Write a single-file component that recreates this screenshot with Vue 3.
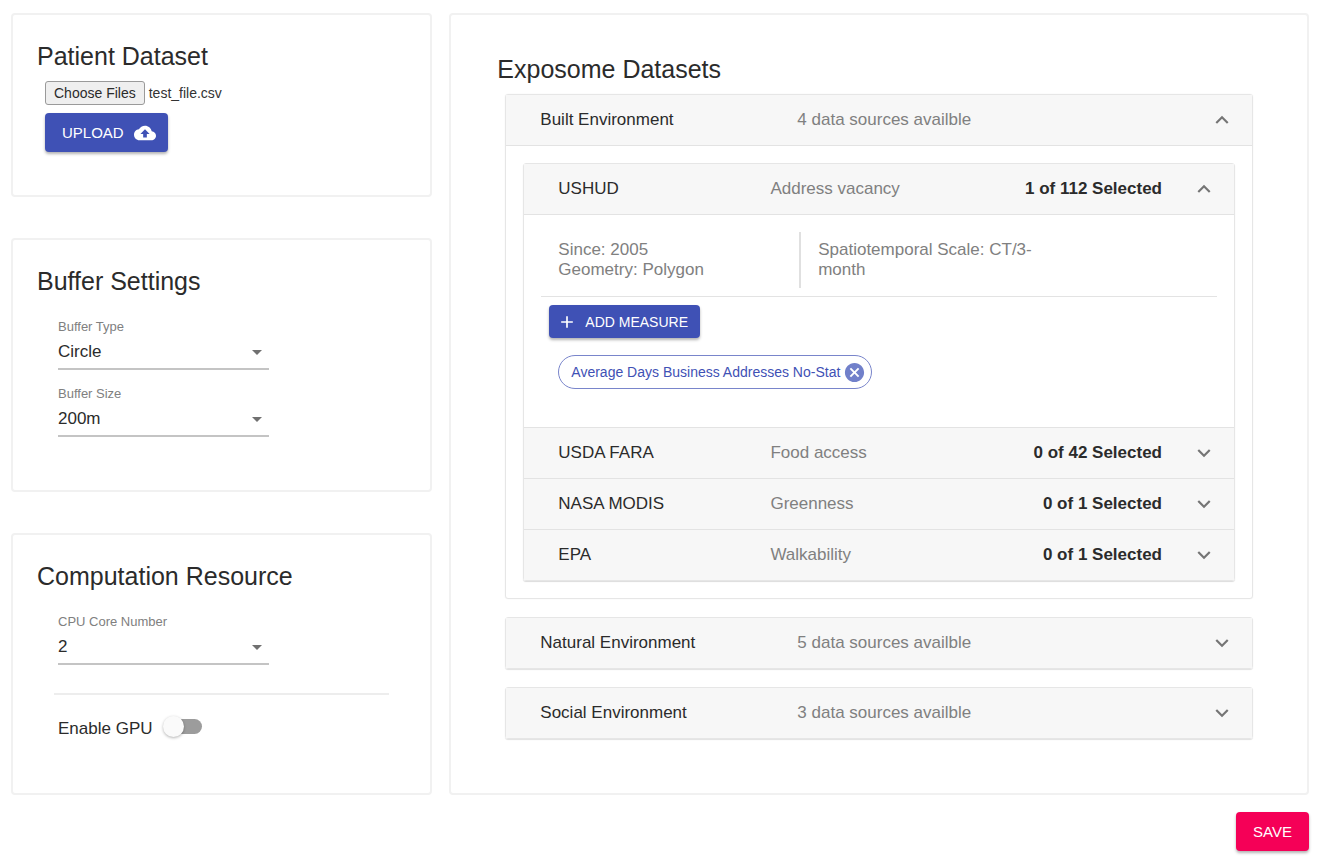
<script setup>
import { onMounted, ref } from 'vue';

const fileInput = ref(null);
const bufferType = ref('Circle');
const bufferSize = ref('200m');
const cpuCores = ref('2');
const enableGpu = ref(false);

const categories = ref([
  {
    name: 'Built Environment',
    open: true,
    count: 4,
    sources: [
      {
        name: 'USHUD',
        topic: 'Address vacancy',
        total: 112,
        open: true,
        since: 2005,
        geometry: 'Polygon',
        scale: 'CT/3-month',
        measures: ['Average Days Business Addresses No-Stat'],
      },
      { name: 'USDA FARA', topic: 'Food access', total: 42, open: false, measures: [] },
      { name: 'NASA MODIS', topic: 'Greenness', total: 1, open: false, measures: [] },
      { name: 'EPA', topic: 'Walkability', total: 1, open: false, measures: [] },
    ],
  },
  { name: 'Natural Environment', open: false, count: 5, sources: [] },
  { name: 'Social Environment', open: false, count: 3, sources: [] },
]);

function removeMeasure(source, index) {
  source.measures.splice(index, 1);
}

onMounted(() => {
  const transfer = new DataTransfer();
  transfer.items.add(new File([''], 'test_file.csv', { type: 'text/csv' }));
  fileInput.value.files = transfer.files;
});
</script>

<template>
  <main class="page">
    <div class="columns">
      <div class="side">
        <section class="card">
          <h2 class="title">Patient Dataset</h2>
          <div class="upload">
            <input ref="fileInput" class="file" type="file" multiple aria-label="Patient dataset files" />
            <button class="btn primary" type="button">
              Upload
              <svg class="cloud" viewBox="0 0 24 24" aria-hidden="true">
                <path
                  d="M19.35 10.04C18.67 6.59 15.64 4 12 4 9.11 4 6.6 5.64 5.35 8.04 2.34 8.36 0 10.91 0 14c0 3.31 2.69 6 6 6h13c2.76 0 5-2.24 5-5 0-2.64-2.05-4.78-4.65-4.96zM14 13v4h-4v-4H7l5-5 5 5h-3z"
                />
              </svg>
            </button>
          </div>
        </section>

        <section class="card">
          <h2 class="title">Buffer Settings</h2>
          <div class="fields">
            <div class="field">
              <label for="buffer-type">Buffer Type</label>
              <div class="select">
                <select id="buffer-type" v-model="bufferType">
                  <option>Circle</option>
                  <option>Square</option>
                </select>
                <svg viewBox="0 0 24 24" aria-hidden="true"><path d="M7 10l5 5 5-5z" /></svg>
              </div>
            </div>
            <div class="field">
              <label for="buffer-size">Buffer Size</label>
              <div class="select">
                <select id="buffer-size" v-model="bufferSize">
                  <option>100m</option>
                  <option>200m</option>
                  <option>500m</option>
                </select>
                <svg viewBox="0 0 24 24" aria-hidden="true"><path d="M7 10l5 5 5-5z" /></svg>
              </div>
            </div>
          </div>
        </section>

        <section class="card">
          <h2 class="title">Computation Resource</h2>
          <div class="fields">
            <div class="field">
              <label for="cpu-cores">CPU Core Number</label>
              <div class="select">
                <select id="cpu-cores" v-model="cpuCores">
                  <option>1</option>
                  <option>2</option>
                  <option>4</option>
                </select>
                <svg viewBox="0 0 24 24" aria-hidden="true"><path d="M7 10l5 5 5-5z" /></svg>
              </div>
            </div>
          </div>
          <hr class="divider" />
          <div class="gpu">
            <label for="gpu">Enable GPU</label>
            <input id="gpu" v-model="enableGpu" class="switch" type="checkbox" />
          </div>
        </section>
      </div>

      <section class="card datasets">
        <h2 class="title">Exposome Datasets</h2>
        <div class="categories">
          <div v-for="category in categories" :key="category.name" class="panel" :class="{ expanded: category.open }">
            <button
              class="summary"
              :class="{ open: category.open }"
              type="button"
              :aria-expanded="category.open"
              @click="category.open = !category.open"
            >
              <span class="name">{{ category.name }}</span>
              <span class="note">{{ category.count }} data sources availble</span>
              <svg class="chevron" viewBox="0 0 24 24" aria-hidden="true">
                <path d="M16.59 8.59L12 13.17 7.41 8.59 6 10l6 6 6-6z" />
              </svg>
            </button>

            <div v-if="category.open" class="category-body">
              <div class="sources">
                <div v-for="source in category.sources" :key="source.name" class="source">
                  <button
                    class="summary"
                    :class="{ open: source.open }"
                    type="button"
                    :aria-expanded="source.open"
                    @click="source.open = !source.open"
                  >
                    <span class="name">{{ source.name }}</span>
                    <span class="note">{{ source.topic }}</span>
                    <span class="selected">{{ source.measures.length }} of {{ source.total }} Selected</span>
                    <svg class="chevron" viewBox="0 0 24 24" aria-hidden="true">
                      <path d="M16.59 8.59L12 13.17 7.41 8.59 6 10l6 6 6-6z" />
                    </svg>
                  </button>

                  <div v-if="source.open" class="details">
                    <div class="info">
                      <p class="about">Since: {{ source.since }}<br />Geometry: {{ source.geometry }}</p>
                      <p class="scale">Spatiotemporal Scale: {{ source.scale }}</p>
                    </div>
                    <button class="btn primary small" type="button">
                      <svg class="plus" viewBox="0 0 24 24" aria-hidden="true">
                        <path d="M19 13h-6v6h-2v-6H5v-2h6V5h2v6h6v2z" />
                      </svg>
                      Add Measure
                    </button>
                    <div class="chips">
                      <span v-for="(measure, i) in source.measures" :key="measure" class="chip">
                        {{ measure }}
                        <button type="button" :aria-label="'Remove ' + measure" @click="removeMeasure(source, i)">
                          <svg viewBox="0 0 24 24" aria-hidden="true">
                            <path
                              d="M12 2C6.47 2 2 6.47 2 12s4.47 10 10 10 10-4.47 10-10S17.53 2 12 2zm5 13.59L15.59 17 12 13.41 8.41 17 7 15.59 10.59 12 7 8.41 8.41 7 12 10.59 15.59 7 17 8.41 13.41 12 17 15.59z"
                            />
                          </svg>
                        </button>
                      </span>
                    </div>
                  </div>
                </div>
              </div>
            </div>
          </div>
        </div>
      </section>
    </div>

    <div class="actions">
      <button class="btn secondary" type="button">Save</button>
    </div>
  </main>
</template>

<style>
body {
  margin: 0;
  background: #fff;
}
</style>

<style scoped>
.page {
  box-sizing: border-box;
  padding: 13px 19px 13px 11px;
  font-family: 'Liberation Sans', Arial, sans-serif;
  font-size: 17px;
  line-height: 20px;
  color: #2b2b2b;
}

button,
select,
input {
  font-family: inherit;
}

.columns {
  display: grid;
  grid-template-columns: 421fr 859fr;
  gap: 17px;
}

.side {
  display: flex;
  flex-direction: column;
  gap: 41px;
}

.card {
  padding: 24px 41px 53px 24px;
  border: 2px solid #f1f1f1;
  border-radius: 4px;
}

.card:first-child {
  padding-bottom: 43px;
}

.card:last-child {
  flex: 1;
}

.title {
  margin: 0;
  font-size: 25px;
  font-weight: 400;
  line-height: 34px;
}

/* upload */
.upload {
  display: flex;
  flex-direction: column;
  align-items: flex-start;
  gap: 8px;
  padding: 8px 8px 0;
}

.file {
  font-size: 14px;
  line-height: 24px;
  height: 24px;
  color: #333;
}

.file::file-selector-button {
  box-sizing: border-box;
  height: 24px;
  margin: 0 4px 0 0;
  padding: 0 8px;
  border: 1px solid #9a9a9a;
  border-radius: 3px;
  background: #efefef;
  font-family: inherit;
  font-size: 14px;
  color: #2b2b2b;
}

.btn {
  display: inline-flex;
  align-items: center;
  gap: 8px;
  height: 39px;
  padding: 0 17px;
  border: 0;
  border-radius: 4px;
  color: #fff;
  font-size: 15px;
  text-transform: uppercase;
  white-space: nowrap;
  cursor: pointer;
  box-shadow: 0 2px 3px rgba(0, 0, 0, 0.3);
}

.btn svg {
  fill: currentColor;
}

.primary {
  background: #3f51b5;
}

.upload .primary {
  gap: 10px;
  padding-right: 12px;
}

.secondary {
  background: #f50057;
}

.small {
  height: 33px;
  margin: 8px 8px 0;
  padding: 0 12px 0 8px;
  font-size: 14px;
}

.cloud {
  width: 22px;
  height: 22px;
}

.plus {
  width: 20px;
  height: 20px;
}

/* form fields */
.fields {
  display: flex;
  flex-direction: column;
  gap: 16px;
  padding: 21px 21px 0;
}

.field {
  display: flex;
  flex-direction: column;
  width: 211px;
}

.field label {
  font-size: 13px;
  line-height: 16px;
  color: #808080;
}

.select {
  display: grid;
  align-items: center;
  border-bottom: 2px solid #c4c4c4;
}

.select select,
.select svg {
  grid-area: 1 / 1;
}

.select select {
  width: 100%;
  height: 33px;
  padding: 0;
  border: 0;
  outline: 0;
  appearance: none;
  background: transparent;
  color: #2b2b2b;
  font-size: 17px;
}

.select svg {
  justify-self: end;
  width: 24px;
  height: 24px;
  fill: #707070;
  pointer-events: none;
}

.divider {
  height: 2px;
  margin: 28px 0 24px 17px;
  border: 0;
  background: #ededed;
}

.gpu {
  display: flex;
  align-items: flex-start;
  gap: 13px;
  height: 20px;
  padding-left: 21px;
}

.switch {
  display: flex;
  align-items: center;
  width: 36px;
  height: 15px;
  margin: 0;
  border-radius: 8px;
  appearance: none;
  background: #9c9c9c;
  cursor: pointer;
}

.switch::before {
  content: '';
  flex: none;
  width: 21px;
  height: 21px;
  margin-left: -3px;
  border-radius: 50%;
  background: #fafafa;
  box-shadow: 0 1px 3px rgba(0, 0, 0, 0.3);
}

.switch:checked {
  background: #9fa8da;
}

.switch:checked::before {
  margin-left: 18px;
  background: #3f51b5;
}

/* exposome datasets */
.card.datasets {
  padding: 37px 54px 54px 46px;
}

.categories {
  display: flex;
  flex-direction: column;
  gap: 18px;
  padding: 8px 0 0 8px;
}

.panel {
  border: 1px solid #e6e6e6;
  border-radius: 3px;
  box-shadow: 0 1px 1px rgba(0, 0, 0, 0.12);
}

.panel.expanded {
  box-shadow: 0 0 1px rgba(0, 0, 0, 0.12);
}

.summary {
  display: flex;
  align-items: center;
  width: 100%;
  height: 50px;
  padding: 0 17px 0 34px;
  border: 0;
  background: #f7f7f7;
  color: #2b2b2b;
  font-size: 17px;
  text-align: left;
  cursor: pointer;
}

.name {
  flex: 0 0 37%;
}

.source .name {
  flex-basis: 32.2%;
}

.note {
  color: #808080;
}

.selected {
  margin-left: auto;
  font-weight: 700;
}

.chevron {
  flex: none;
  width: 26px;
  height: 26px;
  margin-left: auto;
  fill: #757575;
}

.selected + .chevron {
  margin-left: 29px;
}

.summary.open {
  height: 51px;
  border-bottom: 1px solid #e3e3e3;
}

.summary.open .chevron {
  transform: rotate(180deg);
}

.category-body {
  padding: 17px;
}

.sources {
  border: 1px solid #e6e6e6;
  border-radius: 3px;
  box-shadow: 0 1px 1px rgba(0, 0, 0, 0.14);
}

.source + .source {
  border-top: 1px solid #e3e3e3;
}

.details {
  padding: 17px 17px 38px;
}

.info {
  display: grid;
  grid-template-columns: 65fr 60fr 44fr;
  padding-bottom: 8px;
  border-bottom: 1px solid #e3e3e3;
  color: #808080;
}

.info p {
  margin: 0;
  padding: 8px 0 8px 17px;
}

.about {
  border-right: 2px solid #e0e0e0;
}

.chips {
  display: flex;
  flex-wrap: wrap;
  gap: 8px;
  padding: 17px 17px 0;
}

.chip {
  display: inline-flex;
  align-items: center;
  gap: 3px;
  box-sizing: border-box;
  height: 34px;
  padding: 0 5px 0 12px;
  border: 1px solid #7985cb;
  border-radius: 17px;
  color: #3f51b5;
  font-size: 14px;
}

.chip button {
  display: flex;
  padding: 0;
  border: 0;
  background: none;
  cursor: pointer;
}

.chip svg {
  width: 23px;
  height: 23px;
  fill: #7180ca;
}

.actions {
  display: flex;
  justify-content: flex-end;
  padding-top: 17px;
}
</style>
